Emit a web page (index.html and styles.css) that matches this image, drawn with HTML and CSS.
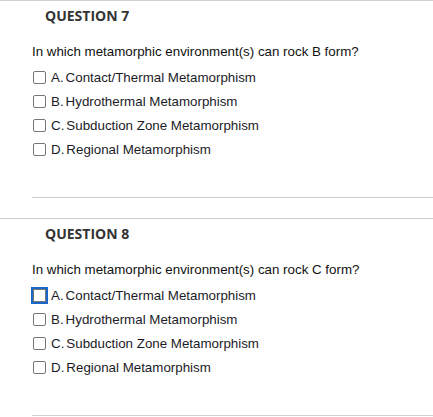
FILE: index.html
```html
<!DOCTYPE html>
<html lang="en">
<head>
<meta charset="utf-8">
<title>Questions</title>
<link rel="stylesheet" href="styles.css">
</head>
<body>
<section class="question">
  <h3 class="q-title">QUESTION 7</h3>
  <div class="q-body">
    <p class="q-text">In which metamorphic environment(s) can rock B form?</p>
    <ul class="options">
      <li class="option"><span class="box"></span><span class="letter">A.</span><span>Contact/Thermal Metamorphism</span></li>
      <li class="option"><span class="box"></span><span class="letter">B.</span><span>Hydrothermal Metamorphism</span></li>
      <li class="option"><span class="box"></span><span class="letter">C.</span><span>Subduction Zone Metamorphism</span></li>
      <li class="option"><span class="box"></span><span class="letter">D.</span><span>Regional Metamorphism</span></li>
    </ul>
  </div>
</section>
<section class="question">
  <h3 class="q-title">QUESTION 8</h3>
  <div class="q-body">
    <p class="q-text">In which metamorphic environment(s) can rock C form?</p>
    <ul class="options">
      <li class="option"><span class="box focused"></span><span class="letter">A.</span><span>Contact/Thermal Metamorphism</span></li>
      <li class="option"><span class="box"></span><span class="letter">B.</span><span>Hydrothermal Metamorphism</span></li>
      <li class="option"><span class="box"></span><span class="letter">C.</span><span>Subduction Zone Metamorphism</span></li>
      <li class="option"><span class="box"></span><span class="letter">D.</span><span>Regional Metamorphism</span></li>
    </ul>
  </div>
</section>
</body>
</html>
```
FILE: styles.css
```css
html, body {
  margin: 0;
  padding: 0;
  background: #ffffff;
}
body {
  font-family: "Liberation Sans", Arial, sans-serif;
  color: #1b1b1b;
}
.question {
  border-top: 1px solid #d0d0d0;
  margin-bottom: 20px;
}
.q-title {
  margin: 0;
  padding: 5px 0 0 45px;
  font-family: "Open Sans", "Liberation Sans", sans-serif;
  font-weight: 700;
  font-size: 14px;
  line-height: 20px;
  color: #333333;
}
.q-body {
  margin-left: 32px;
  border-bottom: 1px solid #d0d0d0;
  padding-bottom: 36px;
}
.q-text {
  margin: 18px 0 0 0;
  font-size: 13.33px;
  line-height: 16px;
  color: #111111;
}
.options {
  list-style: none;
  margin: 5px 0 0 0;
  padding: 0;
}
.option {
  display: flex;
  align-items: center;
  height: 24px;
  font-size: 13.33px;
  color: #1c1c28;
}
.box {
  box-sizing: border-box;
  width: 13px;
  height: 13px;
  margin-left: 1px;
  margin-right: 5px;
  border: 1px solid #767676;
  border-radius: 2px;
  background: #ffffff;
  flex: none;
}
.box.focused {
  border-radius: 0;
  box-shadow: 0 0 0 2px #1a67c9;
}
.letter {
  margin-right: 2px;
}
```
